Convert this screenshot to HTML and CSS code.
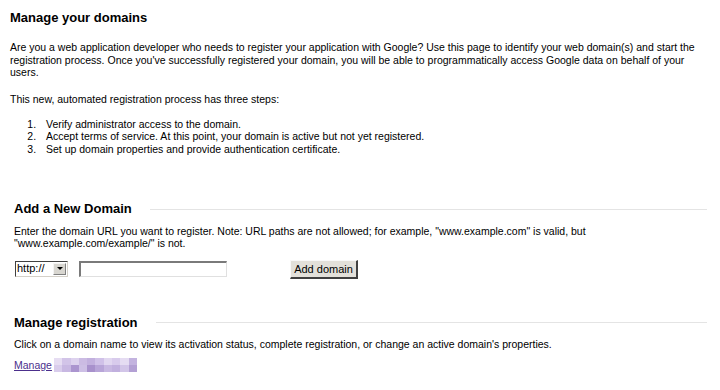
FILE: index.html
```html
<!DOCTYPE html>
<html lang="en">
<head>
    <meta charset="UTF-8">
    <title>Manage your domains</title>
    <link rel="stylesheet" href="styles.css">
</head>
<body>
    <h1 class="page-title">Manage your domains</h1>

    <p class="intro">Are you a web application developer who needs to register your application with Google? Use this page to identify your web domain(s) and start the registration process. Once you've successfully registered your domain, you will be able to programmatically access Google data on behalf of your users.</p>

    <p class="steps-intro">This new, automated registration process has three steps:</p>

    <ol class="steps">
        <li>Verify administrator access to the domain.</li>
        <li>Accept terms of service. At this point, your domain is active but not yet registered.</li>
        <li>Set up domain properties and provide authentication certificate.</li>
    </ol>

    <!-- Add a new domain -->
    <div class="section section-add">
        <h2 class="section-title"><span>Add a New Domain</span></h2>
        <p class="section-text">Enter the domain URL you want to register. Note: URL paths are not allowed; for example, "www.example.com" is valid, but "www.example.com/example/" is not.</p>
        <form class="domain-form" onsubmit="return false;">
            <div class="select-box">
                <select class="scheme-select">
                    <option>http://</option>
                    <option>https://</option>
                </select>
                <span class="select-arrow"></span>
            </div>
            <input type="text" class="domain-input">
            <button type="submit" class="add-button">Add domain</button>
        </form>
    </div>

    <!-- Manage registration -->
    <div class="section section-manage">
        <h2 class="section-title"><span>Manage registration</span></h2>
        <p class="section-text">Click on a domain name to view its activation status, complete registration, or change an active domain's properties.</p>
        <div class="domain-links">
            <a href="#" class="manage-link">Manage</a>
            <span class="blurred">
                <i class="b1"></i><i class="b2"></i><i class="b3"></i><i class="b4"></i><i class="b5"></i>
                <i class="b6"></i><i class="b7"></i><i class="b8"></i><i class="b9"></i><i class="b10"></i>
                <i class="c1"></i><i class="c2"></i><i class="c3"></i><i class="c4"></i><i class="c5"></i>
                <i class="c6"></i><i class="c7"></i><i class="c8"></i><i class="c9"></i><i class="c10"></i>
            </span>
        </div>
    </div>
</body>
</html>
```

FILE: styles.css
```css
* {
    margin: 0;
    padding: 0;
    box-sizing: border-box;
}

body {
    font-family: "Liberation Sans", Arial, sans-serif;
    font-size: 10.5px;
    line-height: 12.7px;
    color: #000;
    background: #fff;
    padding: 10px 13px 0 10px;
}

.page-title {
    font-size: 13px;
    line-height: 15px;
    font-weight: bold;
}

.intro {
    margin-top: 16px;
}

.steps-intro {
    margin-top: 13.5px;
}

.steps {
    margin-top: 12.3px;
    padding-left: 29px;
}

.steps li {
    padding-left: 7px;
}

/* sections */
.section {
    padding-left: 4px;
}

.section-add {
    margin-top: 45.7px;
}

.section-manage {
    margin-top: 36.5px;
}

.section-title {
    display: flex;
    align-items: center;
    gap: 18px;
    font-size: 13px;
    line-height: 15px;
    font-weight: bold;
}

.section-title::after {
    content: "";
    flex: 1;
    height: 1px;
    background: #e4e4e4;
    margin-top: 1px;
}

.section-text {
    margin-top: 8.2px;
}

/* form */
.domain-form {
    display: flex;
    align-items: center;
    margin-top: 9px;
    height: 19px;
}

.select-box {
    display: flex;
    align-items: stretch;
    width: 53px;
    height: 16px;
    margin-left: 1px;
    border-top: 1px solid #404040;
    border-left: 1px solid #404040;
    border-right: 1px solid #d4d0c8;
    border-bottom: 1px solid #d4d0c8;
    background: #fff;
}

.scheme-select {
    appearance: none;
    -webkit-appearance: none;
    border: none;
    outline: none;
    background: transparent;
    font-family: inherit;
    font-size: 11px;
    line-height: 13px;
    color: #000;
    width: 38px;
    padding-left: 1px;
}

.select-arrow {
    width: 13px;
    margin: 1px 1px 1px 0;
    background: #d8d6d0;
    border-right: 1px solid #808080;
    border-bottom: 1px solid #808080;
    border-top: 1px solid #f4f4f4;
    border-left: 1px solid #f4f4f4;
    display: flex;
    align-items: center;
    justify-content: center;
}

.select-arrow::before {
    content: "";
    border-left: 3px solid transparent;
    border-right: 3px solid transparent;
    border-top: 3px solid #000;
}

.domain-input {
    width: 148px;
    height: 16px;
    margin-left: 11px;
    border-top: 2px solid #7a7a7a;
    border-left: 2px solid #7a7a7a;
    border-right: 1px solid #e0e0e0;
    border-bottom: 1px solid #e0e0e0;
    font-family: inherit;
    font-size: 11px;
    outline: none;
}

.add-button {
    width: 68px;
    height: 19px;
    margin-left: 63px;
    margin-top: 2px;
    background: #e2e0da;
    border-top: 1px solid #f8f8f8;
    border-left: 1px solid #f8f8f8;
    border-right: 2px solid #404040;
    border-bottom: 2px solid #404040;
    font-family: inherit;
    font-size: 11px;
    color: #000;
    cursor: pointer;
}

/* manage links */
.domain-links {
    display: flex;
    align-items: center;
    margin-top: 8.3px;
}

.manage-link {
    color: #4c2f8c;
    text-decoration: underline;
}

.blurred {
    display: grid;
    grid-template-columns: repeat(10, 8.3px);
    grid-template-rows: 7px 7px;
    margin-left: 2px;
    margin-top: -1px;
}

.blurred i { display: block; }
.b1 { background: #e6ddf2; }
.b2 { background: #d2c4e8; }
.b3 { background: #ddd2ee; }
.b4 { background: #cbbbe3; }
.b5 { background: #c2b0de; }
.b6 { background: #d0c1e8; }
.b7 { background: #e1d7f0; }
.b8 { background: #d8cbec; }
.b9 { background: #e5dcf2; }
.b10 { background: #c3b3df; }
.c1 { background: #d9cdec; }
.c2 { background: #c8b8e2; }
.c3 { background: #ab95cf; }
.c4 { background: #cdbfe5; }
.c5 { background: #a891cc; }
.c6 { background: #b8a5d8; }
.c7 { background: #c8b8e2; }
.c8 { background: #c1b0de; }
.c9 { background: #d2c5e8; }
.c10 { background: #b3a0d4; }
```
